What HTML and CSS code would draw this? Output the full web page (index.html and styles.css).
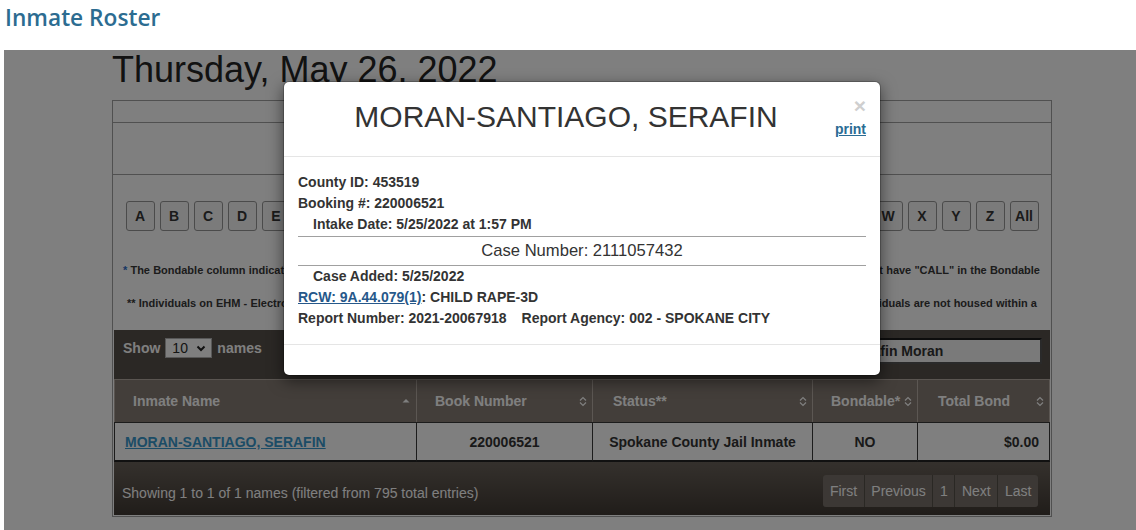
FILE: index.html
```html
<!DOCTYPE html>
<html lang="en">
<head>
<meta charset="utf-8">
<title>Inmate Roster</title>
<link rel="stylesheet" href="styles.css">
</head>
<body>
<h1 class="page-title">Inmate Roster</h1>
<div class="frame">
  <div class="roster">
    <h2 class="date">Thursday, May 26, 2022</h2>
    <div class="panel">
      <div class="panel-row row-a"></div>
      <div class="panel-row row-b"></div>
      <div class="panel-row row-c">
        <div class="letters">
          <span class="letter">A</span><span class="letter">B</span><span class="letter">C</span><span class="letter">D</span><span class="letter">E</span><span class="letter">F</span><span class="letter">G</span><span class="letter">H</span><span class="letter">I</span><span class="letter">J</span><span class="letter">K</span><span class="letter">L</span><span class="letter">M</span><span class="letter">N</span><span class="letter">O</span><span class="letter">P</span><span class="letter">Q</span><span class="letter">R</span><span class="letter">S</span><span class="letter">T</span><span class="letter">U</span><span class="letter">V</span><span class="letter">W</span><span class="letter">X</span><span class="letter">Y</span><span class="letter">Z</span><span class="letter">All</span>
        </div>
        <div class="notes">
          <p class="note note-1"><span class="star">*</span> The Bondable column indicates whether an inmate is currently eligible to post bond. Individuals with holds, warrants or no-bail charges will not have "CALL" in the Bondable</p>
          <p class="note note-2">** Individuals on EHM - Electronic Home Monitoring, Work Release, or in Work Crew programs are listed with active status, however these individuals are not housed within a</p>
        </div>
        <div class="dt">
          <div class="dt-top">
            <div class="length">Show <span class="select">10<svg class="chev" width="10" height="7" viewBox="0 0 10 7"><path d="M1.5 1.5 L5 5 L8.5 1.5" fill="none" stroke="#222" stroke-width="2"/></svg></span> names</div>
            <div class="search">Search: <span class="input">Serafin Moran</span></div>
          </div>
          <table class="grid">
            <colgroup><col class="c1"><col class="c2"><col class="c3"><col class="c4"><col class="c5"></colgroup>
            <thead>
              <tr>
                <th><div class="th-in"><span>Inmate Name</span><svg class="sort" width="8" height="10" viewBox="0 0 8 10"><path d="M0.5 6.5 L4 3 L7.5 6.5 Z" fill="#fff"/></svg></div></th>
                <th><div class="th-in"><span>Book Number</span><svg class="sort" width="8" height="11" viewBox="0 0 8 11"><path d="M1 4.5 L4 1.5 L7 4.5 M1 6.5 L4 9.5 L7 6.5" fill="none" stroke="#fff" stroke-width="1.2"/></svg></div></th>
                <th class="pad20"><div class="th-in"><span>Status**</span><svg class="sort" width="8" height="11" viewBox="0 0 8 11"><path d="M1 4.5 L4 1.5 L7 4.5 M1 6.5 L4 9.5 L7 6.5" fill="none" stroke="#fff" stroke-width="1.2"/></svg></div></th>
                <th><div class="th-in"><span>Bondable*</span><svg class="sort" width="8" height="11" viewBox="0 0 8 11"><path d="M1 4.5 L4 1.5 L7 4.5 M1 6.5 L4 9.5 L7 6.5" fill="none" stroke="#fff" stroke-width="1.2"/></svg></div></th>
                <th class="pad20"><div class="th-in"><span>Total Bond</span><svg class="sort" width="8" height="11" viewBox="0 0 8 11"><path d="M1 4.5 L4 1.5 L7 4.5 M1 6.5 L4 9.5 L7 6.5" fill="none" stroke="#fff" stroke-width="1.2"/></svg></div></th>
              </tr>
            </thead>
            <tbody>
              <tr>
                <td class="name"><a href="#">MORAN-SANTIAGO, SERAFIN</a></td>
                <td class="center">220006521</td>
                <td class="center">Spokane County Jail Inmate</td>
                <td class="center">NO</td>
                <td class="right">$0.00</td>
              </tr>
            </tbody>
          </table>
          <div class="dt-foot">
            <div class="info">Showing 1 to 1 of 1 names (filtered from 795 total entries)</div>
            <div class="pager"><span>First</span><span>Previous</span><span>1</span><span>Next</span><span>Last</span></div>
          </div>
        </div>
      </div>
    </div>
  </div>
  <div class="backdrop"></div>
  <div class="modal">
    <div class="modal-head">
      <h3 class="modal-title">MORAN-SANTIAGO, SERAFIN</h3>
      <div class="head-tools">
        <span class="close">×</span>
        <a class="print" href="#">print</a>
      </div>
    </div>
    <div class="modal-body">
      <div class="line">County ID: 453519</div>
      <div class="line">Booking #: 220006521</div>
      <div class="line indent">Intake Date: 5/25/2022 at 1:57 PM</div>
      <div class="rule"></div>
      <div class="case-no">Case Number: 2111057432</div>
      <div class="rule"></div>
      <div class="line indent">Case Added: 5/25/2022</div>
      <div class="line"><a href="#">RCW: 9A.44.079</a><a href="#">(1)</a>: CHILD RAPE-3D</div>
      <div class="line">Report Number: 2021-20067918<span class="agency">Report Agency: 002 - SPOKANE CITY</span></div>
    </div>
    <div class="modal-foot"></div>
  </div>
</div>
</body>
</html>
```
FILE: styles.css
```css
* { box-sizing: border-box; }
html, body { margin: 0; padding: 0; background: #fff; }
body {
  width: 1136px;
  height: 530px;
  overflow: hidden;
  font-family: "Liberation Sans", Arial, sans-serif;
  color: #333;
}

.page-title {
  margin: 0;
  height: 50px;
  padding: 3px 0 0 5px;
  font-family: "Open Sans", sans-serif;
  font-weight: 600;
  font-size: 22.7px;
  line-height: 30px;
  color: #2c6c91;
}

.frame {
  position: relative;
  margin-left: 4px;
  height: 480px;
  background: #fff;
  overflow: hidden;
}

.roster {
  width: 940px;
  margin-left: 108px;
}

.date {
  margin: 0 0 10px;
  font-weight: normal;
  font-size: 36px;
  line-height: 40px;
  color: #242424;
}

.panel {
  border: 1px solid #a0a0a0;
}
.row-a { height: 22px; border-bottom: 1px solid #a0a0a0; }
.row-b { height: 52px; border-bottom: 1px solid #a0a0a0; }
.row-c { padding-top: 26px; padding-bottom: 1px; }

.letters {
  display: flex;
  justify-content: center;
  gap: 5px;
}
.letter {
  width: 29px;
  height: 30px;
  display: flex;
  align-items: center;
  justify-content: center;
  border: 1px solid #969696;
  border-radius: 3px;
  background: #f6f6f6;
  font-weight: bold;
  font-size: 14px;
  color: #363636;
}

.notes { margin-top: 33px; }
.note {
  margin: 0 0 20px;
  font-size: 11px;
  font-weight: bold;
  line-height: 13px;
  color: #383838;
  white-space: nowrap;
  overflow: hidden;
  text-align: justify;
  text-align-last: justify;
}
.note-1 { padding: 0 11px 0 10px; }
.note-2 { padding: 0 14px 0 14px; }
.star { color: #2d6ec8; }

.dt { margin: 0 1px; }
.dt-top {
  height: 49px;
  display: flex;
  align-items: flex-start;
  justify-content: space-between;
  padding: 8px 8px 0 9px;
  background: #57504a;
  color: #fff;
  font-weight: bold;
  font-size: 14px;
}
.length { display: flex; align-items: center; gap: 5px; height: 20px; }
.select {
  width: 47px;
  height: 20px;
  display: inline-flex;
  align-items: center;
  justify-content: space-between;
  padding: 0 5px 0 6px;
  background: #fff;
  border: 1px solid #b0b0b0;
  color: #2a2a2a;
  font-weight: normal;
  font-size: 14px;
}
.search { display: flex; align-items: center; gap: 6px; }
.input {
  width: 195px;
  height: 26px;
  display: flex;
  align-items: center;
  padding-left: 1px;
  background: #f4f4f4;
  border: 2px solid #1a1a1a;
  border-right-color: #555;
  border-bottom-color: #555;
  color: #333;
  font-weight: bold;
  font-size: 14px;
}

.grid {
  width: 100%;
  table-layout: fixed;
  border-collapse: separate;
  border-spacing: 0;
  font-size: 14px;
  font-weight: bold;
}
.c1 { width: 303px; }
.c2 { width: 176px; }
.c3 { width: 220px; }
.c4 { width: 105px; }
.c5 { width: 132px; }

.grid th {
  height: 43px;
  padding: 0 5px 0 18px;
  background: #877d75;
  border-top: 1px solid #b4aaa2;
  border-right: 1px solid #b8aea6;
  text-align: left;
  color: #fff;
  font-weight: bold;
}
.grid th.pad20 { padding-left: 20px; }
.grid th:first-child { border-left: 1px solid #b4aaa2; }
.th-in { display: flex; align-items: center; justify-content: space-between; }
.sort { flex: none; }
.grid th:first-child .sort { margin-right: 1px; }

.grid td {
  height: 40px;
  padding: 0 10px;
  background: #fff;
  border-top: 1px solid #383838;
  border-right: 1px solid #383838;
  border-bottom: 2px solid #222;
  color: #333;
}
.grid td:first-child { border-left: 1px solid #383838; }
.grid td.center { text-align: center; }
.grid td.right { text-align: right; }
.grid td.name a { color: #3898cc; text-decoration: underline; }

.dt-foot {
  height: 53px;
  display: flex;
  align-items: center;
  justify-content: space-between;
  padding: 4px 12px 0 8px;
  background: linear-gradient(#6a625a, #413a34);
  color: #fff;
  font-size: 14px;
}
.info { margin-top: 4px; }
.pager {
  display: flex;
  height: 32px;
  background: #555049;
  border-radius: 3px;
  overflow: hidden;
  gap: 1px;
}
.pager span {
  display: flex;
  align-items: center;
  padding: 0 6.6px;
  background: #78716b;
}

.backdrop {
  position: absolute;
  inset: 0;
  background: rgba(0, 0, 0, 0.5);
}

.modal {
  position: absolute;
  left: 279px;
  top: 31px;
  width: 598px;
  background: #fff;
  border: 1px solid rgba(0, 0, 0, 0.2);
  border-radius: 6px;
  box-shadow: 0 5px 15px rgba(0, 0, 0, 0.5);
  background-clip: padding-box;
}
.modal-head {
  display: flex;
  padding: 15px 14px 0 14px;
  height: 75px;
  border-bottom: 1px solid #e5e5e5;
}
.modal-title {
  flex: 1;
  margin: 0;
  text-align: center;
  font-weight: normal;
  font-size: 30px;
  line-height: 40px;
  color: #333;
}
.head-tools {
  width: 32px;
  display: flex;
  flex-direction: column;
  align-items: flex-end;
}
.close {
  margin-top: -2px;
  font-weight: bold;
  font-size: 21px;
  line-height: 21px;
  color: #cfcfcf;
}
.print {
  margin-top: 5px;
  font-weight: bold;
  font-size: 14px;
  line-height: 16px;
  color: #2a6c94;
  text-decoration: underline;
}

.modal-body {
  padding: 15px 14px 15px 14px;
  font-size: 14px;
  font-weight: bold;
  color: #333;
}
.line { line-height: 21px; white-space: nowrap; }
.line.indent { padding-left: 15px; }
.line a { color: #26588a; text-decoration: underline; }
.agency { margin-left: 15px; }
.rule { height: 1px; margin-top: 1px; background: #a0a0a0; }
.case-no {
  height: 28px;
  line-height: 28px;
  text-align: center;
  font-weight: normal;
  font-size: 16.6px;
  color: #333;
}
.case-no + .rule { margin-top: 0; }
.modal-foot {
  height: 31px;
  border-top: 1px solid #e5e5e5;
}
```
